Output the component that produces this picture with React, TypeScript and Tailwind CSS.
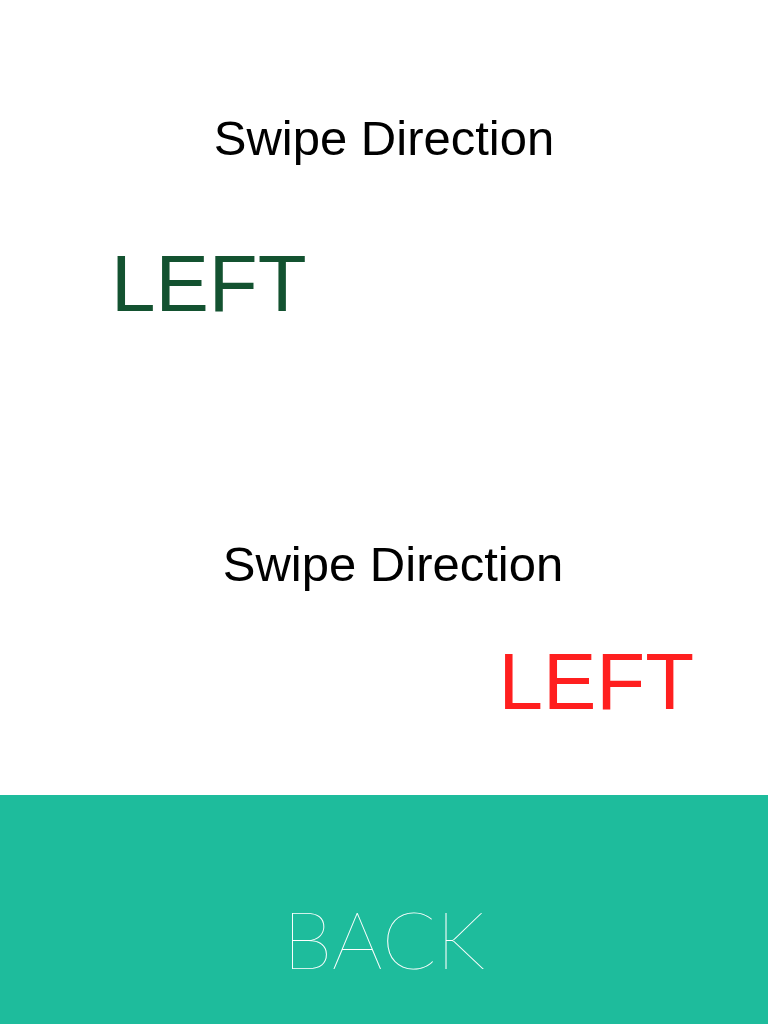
const SwipeLabel = ({ children, className }: { children: string; className?: string }) => (
    <div className={`text-[49px] leading-none text-black ${className ?? ''}`}>{children}</div>
);

const App = () => {
    return (
        <div className="w-[768px] h-[1024px] flex flex-col bg-white" style={{ fontFamily: '"Liberation Sans", Arial, sans-serif' }}>
            <section className="h-[795px] flex flex-col">
                <SwipeLabel className="mt-[114px] text-center">Swipe Direction</SwipeLabel>
                <div className="mt-[81px] pl-[111px] text-[80px] leading-none text-[#135230]">LEFT</div>
                <SwipeLabel className="mt-[216px] text-center pl-[18px]">Swipe Direction</SwipeLabel>
                <div className="mt-[53px] pr-[74px] text-right text-[80px] leading-none text-[#ff1f1f]">LEFT</div>
            </section>
            <button
                type="button"
                className="flex-1 flex justify-center bg-[#1ebc9c] pt-[103px] text-white text-[80px] leading-none font-thin"
                style={{ fontFamily: 'Lato, "Helvetica Neue", sans-serif' }}
            >
                BACK
            </button>
        </div>
    );
};

export default App;
